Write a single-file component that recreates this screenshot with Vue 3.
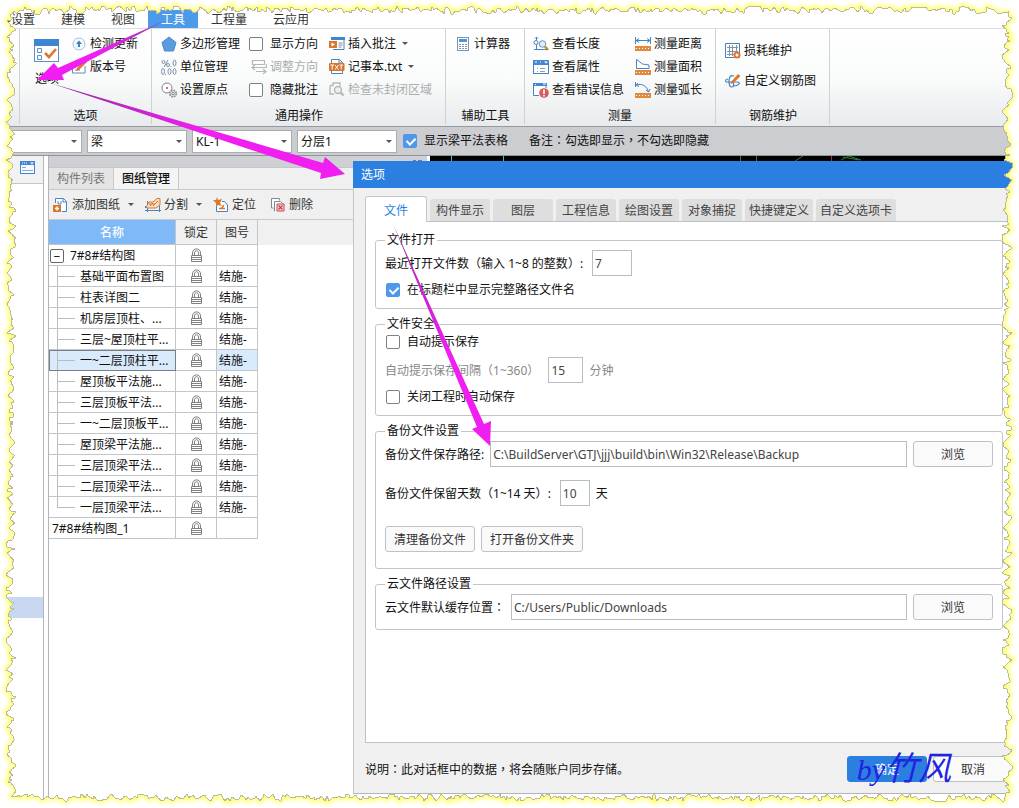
<script setup>
import { ref } from 'vue'

const menus = ['工程设置', '建模', '视图', '工具', '工程量', '云应用']

const icons = {
  options: '<rect x="0.500" y="0.500" width="24" height="22" fill="#fff" stroke="#5d8fc0"/><rect x="0" y="0" width="25" height="7" fill="#3f86d2"/><path d="M3.500 9.500h4v4h-4zM3.500 16.500h4v4h-4z" fill="none" stroke="#5d8fc0"/><path d="M11 14l4 4 7-8" fill="none" stroke="#e0762c" stroke-width="2.600"/>',
  update: '<circle cx="8" cy="8" r="6" fill="#f4f9fd" stroke="#a3c1dc"/><path d="M8 4.500L11 8H9v3H7V8H5z" fill="#3f7fc0"/>',
  version: '<path d="M14 7v7H1.500V5H8" fill="#fff" stroke="#5d8fc0"/><path d="M4 11h5" stroke="#5d8fc0"/><path d="M6 9L14 1l2 2-8 8-3 1z" fill="#e0762c"/>',
  polygon: '<path d="M8 1l7 5.500L12.500 15h-9L1 6.500z" fill="#5b9be0" stroke="#4787d0"/>',
  unit: '<g fill="none" stroke="#7c8fa3"><circle cx="2.500" cy="3" r="1.500"/><path d="M7 1L3 8"/><circle cx="7" cy="6" r="1.500"/><ellipse cx="13.500" cy="4" rx="1.500" ry="3"/><ellipse cx="2" cy="12.500" rx="1.500" ry="3"/><ellipse cx="8.500" cy="12.500" rx="1.500" ry="3"/><ellipse cx="13.500" cy="12.500" rx="1.500" ry="3"/><path d="M10 7v1M4.500 15v1"/></g>',
  origin: '<circle cx="6" cy="6" r="5" fill="#fff" stroke="#788796"/><circle cx="6" cy="6" r="1" fill="#d43d3d"/><circle cx="12" cy="11.500" r="3.300" fill="#ddd" stroke="#85898e" stroke-width="1.600" stroke-dasharray="1.600 1"/><circle cx="12" cy="11.500" r="1.200" fill="#fff" stroke="#85898e"/>',
  adjust: '<g fill="none" stroke="#b4b7ba" stroke-width="1.200"><path d="M1.500 1.500h12v4h-12zM15.500 5v3.500H1M4 6l-3 2.500L4 11M5 12.500h10M12 10l3 2.500-3 2.500"/></g>',
  note: '<path d="M2 2.500h13v11H4" fill="#fff" stroke="#4683c2"/><path d="M2 1h14v3H2z" fill="#3f86d2"/><path d="M0 5h8v7H0z" fill="#d9772f"/><path d="M2.500 6.500l3.500 2-3.500 2z" fill="#fff"/><path d="M9.500 7h4M9.500 9h4M9.500 11h3" stroke="#888"/>',
  txt: '<path d="M2.500 5V.5h8l3 3V5M2.500 12v2.500h11V12" fill="#fff" stroke="#4683c2"/><path d="M10 .5V4h4" fill="none" stroke="#4683c2"/><rect x="0" y="4" width="15.500" height="8" rx="1" fill="#d9772f"/><path d="M1.500 6h3.500M3.200 6v4.500M6 6l3.500 4.500M9.500 6L6 10.500M10.500 6H14M12.200 6v4.500" stroke="#fff" fill="none"/>',
  region: '<path d="M1 3.500h3V1h7v3M1 3.500V12h4" fill="none" stroke="#b4b7ba" stroke-width="1.300"/><circle cx="9" cy="8" r="3.500" fill="#eee" stroke="#b4b7ba" stroke-width="1.400"/><path d="M11.500 10.500l3 3" stroke="#b4b7ba" stroke-width="2.400"/>',
  calc: '<rect x="2.500" y="1.500" width="11" height="13" fill="#fff" stroke="#7996b4"/><rect x="4" y="3" width="8" height="3" fill="#4f93dc"/><path d="M4 8.500h8M4 10.500h8M4 12.500h8" stroke="#7996b4" stroke-dasharray="2 1"/>',
  length: '<path d="M3.500 1v3M2 2.500L3.500 1 5 2.500M3.500 8v6M1 13.500h14" fill="none" stroke="#4683c2"/><circle cx="3" cy="6.500" r="2" fill="#fff" stroke="#4683c2"/><circle cx="9.500" cy="8" r="3.300" fill="#dcebf8" stroke="#6c94bd"/><path d="M12 10.500l3 3.500" stroke="#c58b30" stroke-width="2.400"/>',
  props: '<rect x=".5" y="1.500" width="15" height="13" fill="#fff" stroke="#4683c2"/><path d="M0 1h16v5H0z" fill="#4488d0"/><path d="M2 3h2M7 3h1" stroke="#fff"/><path d="M11 2.500h4l-2 2z" fill="#fff"/><path d="M4 9.500h1M7 9.500h5M4 12.500h1M7 12.500h5" stroke="#8fa0b1"/>',
  error: '<path d="M13 6V1.500H.5v12H6" fill="#fff" stroke="#4683c2"/><path d="M0 1h14v3H0z" fill="#4488d0"/><path d="M10 2h3M2 2.500h1" stroke="#fff"/><circle cx="11" cy="11" r="4.800" fill="#d65b5f"/><path d="M11 7.500v4.500M11 13v1.500" stroke="#fff" stroke-width="1.600"/>',
  distance: '<path d="M.5 1v7M15.500 1v7M1 4.500h14M4 2.500l-3 2 3 2M12 2.500l3 2-3 2" fill="none" stroke="#4683c2"/><path d="M0 10h16v5H0z" fill="#e08a3e"/><path d="M1 12.500h14" stroke="#fff" stroke-width="1" stroke-dasharray="1 2"/>',
  area: '<path d="M1.500 9.500V.5l6 4.500 6.500 1v3.500z" fill="#fff" stroke="#4683c2"/><path d="M0 11h16v5H0z" fill="#e08a3e"/><path d="M1 13.500h14" stroke="#fff" stroke-dasharray="1 2"/>',
  arc: '<path d="M1 3c6-2 11 1 12.500 7M.5 0v5M3 1L1 3l3 1.500M11 8l2.500 2L15 7" fill="none" stroke="#4683c2"/><path d="M0 11h16v5H0z" fill="#e08a3e"/><path d="M1 13.500h14" stroke="#fff" stroke-dasharray="1 2"/>',
  loss: '<path d="M.5.5h14v14H.5z" fill="#fff" stroke="#4683c2"/><path d="M2 4.500h11M2 8.500h11M2 11.500h7M4.500 2v11M7.500 2v11M11.500 2v7" stroke="#8494a4"/><circle cx="12" cy="12" r="2.500" fill="#fff" stroke="#e0762c" stroke-width="2"/>',
  rebar: '<path d="M9 3C4 1 4 7 4 9s0 5 3 5 1-6 1-7M9 9H2c-2 0-2-3 1-3M9 9h4c3 1 0 4-4 4" fill="none" stroke="#4683c2" stroke-width="1.200"/><path d="M6 9l7-8 2.500 2-7 7-3 1z" fill="#e0762c"/>',
  panel: '<rect x=".5" y="1.500" width="14" height="12" fill="#f8fbfe" stroke="#3f86d2"/><path d="M0 1h15v4H0z" fill="#3f86d2"/><path d="M2 3h1M4 3h1M6 3h1" stroke="#fff"/><path d="M10 2.500h4l-2 2z" fill="#fff"/><path d="M2 7.500h4M2 10.500h11" stroke="#7cacdd"/>',
  addSheet: '<path d="M2.500 6V1.500h8l3 3v10H9" fill="#fff" stroke="#4683c2"/><path d="M10 1.500V5h3.500M5 4v3h3v-3" fill="none" stroke="#4683c2"/><path d="M0 8h8v7H0z" fill="#d9772f"/><path d="M4 9.500v4M2 11.500h4" stroke="#fff" stroke-width="1.400"/>',
  split: '<path d="M0 13.500h16M2.500 4v11M14.500 7v8M.5 9v2" stroke="#4683c2" fill="none"/><path d="M1.500 9.500L4 5h4l4-3.500h3V8l-4 3H1.500z" fill="#f6ddc8" stroke="#d9772f"/><path d="M5 9l3-3M8 9l5-5M4 7h6" stroke="#d9772f"/>',
  locate: '<path d="M3.500 7v7.500h11V8l-3-3.500H9" fill="#fff" stroke="#4683c2"/><path d="M4 0l1 3 4-1-2 4 2 3-4-1-2 2V6L0 3h3z" fill="#d9772f"/><path d="M6 11.500h6M11 8l-3 4" stroke="#d9772f" stroke-width="1.500"/>',
  remove: '<path d="M3.500 11H1.500V1.500h8v2M5 14H4.500V4.500h6l2 2v1" fill="#fff" stroke="#7d8b99"/><path d="M7 7h7v7H7z" fill="#f4dadb" stroke="#c9474e"/><path d="M8.500 8.500l4 4M12.500 8.500l-4 4" stroke="#c9474e" stroke-width="1.400"/>',
  lock: '<path d="M2.500 7V5C2.500-.5 10.500-.5 10.500 5v2M4.500 7V5c0-3 4-3 4 0v2" fill="none" stroke="#808080"/><path d="M1.500 7.500h10v6h-10zM2 9.500h9M2 11.500h9" fill="#fff" stroke="#808080"/>',
}

const measureA = [['length', '查看长度'], ['props', '查看属性'], ['error', '查看错误信息']]
const measureB = [['distance', '测量距离'], ['area', '测量面积'], ['arc', '测量弧长']]
const generalA = [['polygon', '多边形管理'], ['unit', '单位管理'], ['origin', '设置原点']]

const combos = ['', '梁', 'KL-1', '分层1']
const showTable = ref(true)
const showDirection = ref(false)
const hideNotes = ref(false)

const sheetTools = [
  ['addSheet', '添加图纸', true],
  ['split', '分割', true],
  ['locate', '定位', false],
  ['remove', '删除', false],
]
const sheets = [
  '基础平面布置图', '柱表详图二', '机房层顶柱、...', '三层~屋顶柱平...', '一~二层顶柱平...',
  '屋顶板平法施...', '三层顶板平法...', '一~二层顶板平...', '屋顶梁平法施...',
  '三层顶梁平法...', '二层顶梁平法...', '一层顶梁平法...',
]
const selected = ref(4)

const tabs = ['文件', '构件显示', '图层', '工程信息', '绘图设置', '对象捕捉', '快捷键定义', '自定义选项卡']
const activeTab = ref('文件')

const recent = ref('7')
const fullPath = ref(true)
const autoPrompt = ref(false)
const interval = ref('15')
const saveOnClose = ref(false)
const backupPath = ref('C:\\BuildServer\\GTJ\\jjj\\build\\bin\\Win32\\Release\\Backup')
const keepDays = ref('10')
const cloudPath = ref('C:/Users/Public/Downloads')

// Ragged paper edge: a seeded walk between two bounds on each side.
let seed = 37
const rnd = () => {
  seed = (seed * 16807) % 2147483647
  return seed / 2147483647
}
function walk(from, to, low, high) {
  const out = []
  const dir = to > from ? 1 : -1
  let v = (low + high) / 2
  let up = true
  let target = high
  for (let p = from; dir > 0 ? p < to : p > to; p += dir * (1 + Math.floor(rnd() * 3))) {
    if (Math.abs(v - target) < 2) {
      up = !up
      target = up ? high - rnd() * 3 : low + rnd() * 3
    }
    v += Math.sign(target - v) * rnd() * 3.5 + (rnd() - 0.5) * 4
    v = Math.max(low, Math.min(high, v))
    out.push([p, Math.round(v)])
  }
  return out
}
const edge = [
  ...walk(14, 1004, 6, 14),
  ...walk(12, 796, 1002, 1012).map(([y, x]) => [x, y]),
  ...walk(1004, 14, 794, 801),
  ...walk(796, 12, 6, 16).map(([y, x]) => [x, y]),
]
const torn = 'M' + edge.map((p) => p.join(' ')).join('L') + 'Z'
const outside = 'M-20-20H1039V828H-20Z' + torn
</script>

<template>
  <div class="app">
    <nav class="menu">
      <a v-for="m in menus" :key="m" href="#" :class="{ on: m === '工具' }">{{ m }}</a>
    </nav>

    <section class="ribbon">
      <div class="group g-options">
        <div class="cols">
          <button class="big">
            <svg width="26" height="24" viewBox="0 0 26 24" v-html="icons.options" />
            <span>选项</span>
          </button>
          <div class="col">
            <button class="tool"><svg class="ic" viewBox="0 0 16 16" v-html="icons.update" />检测更新</button>
            <button class="tool"><svg class="ic" viewBox="0 0 16 16" v-html="icons.version" />版本号</button>
          </div>
        </div>
        <div class="caption">选项</div>
      </div>

      <div class="group g-general">
        <div class="cols">
          <div class="col">
            <button v-for="t in generalA" :key="t[0]" class="tool">
              <svg class="ic" viewBox="0 0 16 16" v-html="icons[t[0]]" />{{ t[1] }}
            </button>
          </div>
          <div class="col">
            <label class="check"><input v-model="showDirection" type="checkbox" />显示方向</label>
            <button class="tool off inset" disabled><svg class="ic" viewBox="0 0 16 16" v-html="icons.adjust" />调整方向</button>
            <label class="check"><input v-model="hideNotes" type="checkbox" />隐藏批注</label>
          </div>
          <div class="col">
            <button class="tool"><svg class="ic" viewBox="0 0 16 16" v-html="icons.note" />插入批注<i class="caret" /></button>
            <button class="tool"><svg class="ic" viewBox="0 0 16 16" v-html="icons.txt" />记事本.txt<i class="caret" /></button>
            <button class="tool off" disabled><svg class="ic" viewBox="0 0 16 16" v-html="icons.region" />检查未封闭区域</button>
          </div>
        </div>
        <div class="caption">通用操作</div>
      </div>

      <div class="group g-aid">
        <div class="cols">
          <div class="col">
            <button class="tool"><svg class="ic" viewBox="0 0 16 16" v-html="icons.calc" />计算器</button>
          </div>
        </div>
        <div class="caption">辅助工具</div>
      </div>

      <div class="group g-measure">
        <div class="cols">
          <div class="col">
            <button v-for="t in measureA" :key="t[0]" class="tool">
              <svg class="ic" viewBox="0 0 16 16" v-html="icons[t[0]]" />{{ t[1] }}
            </button>
          </div>
          <div class="col">
            <button v-for="t in measureB" :key="t[0]" class="tool">
              <svg class="ic" viewBox="0 0 16 16" v-html="icons[t[0]]" />{{ t[1] }}
            </button>
          </div>
        </div>
        <div class="caption">测量</div>
      </div>

      <div class="group g-rebar">
        <div class="cols">
          <div class="col loose">
            <button class="tool"><svg class="ic" viewBox="0 0 16 16" v-html="icons.loss" />损耗维护</button>
            <button class="tool"><svg class="ic" viewBox="0 0 16 16" v-html="icons.rebar" />自定义钢筋图</button>
          </div>
        </div>
        <div class="caption">钢筋维护</div>
      </div>
    </section>

    <section class="bar">
      <span v-for="(c, i) in combos" :key="i" class="combo" :class="{ first: i === 0 }">
        <select :aria-label="'构件 ' + (i + 1)"><option>{{ c }}</option></select>
        <i class="caret" />
      </span>
      <label class="check"><input v-model="showTable" type="checkbox" />显示梁平法表格</label>
      <span class="remark">备注<span class="mid">：</span>勾选即显示<span class="mid">，</span>不勾选即隐藏</span>
    </section>

    <main class="body">
      <aside class="strip">
        <div class="strip-head"><svg class="ic" viewBox="0 0 16 16" v-html="icons.panel" /></div>
        <div class="strip-mark" />
      </aside>

      <section class="sheets">
        <div class="sheet-tabs">
          <button>构件列表</button>
          <button class="on">图纸管理</button>
        </div>
        <div class="sheet-tools">
          <button v-for="t in sheetTools" :key="t[0]" class="tool">
            <svg class="ic" viewBox="0 0 16 16" v-html="icons[t[0]]" />{{ t[1] }}<i v-if="t[2]" class="caret" />
          </button>
        </div>
        <div class="table-wrap">
          <table>
            <thead>
              <tr><th class="name">名称</th><th class="lock">锁定</th><th class="no">图号</th></tr>
            </thead>
            <tbody>
              <tr>
                <td class="root"><div><button class="fold" aria-label="折叠">−</button>7#8#结构图</div></td>
                <td class="lock"><svg width="13" height="14" viewBox="0 0 13 14" v-html="icons.lock" /></td>
                <td />
              </tr>
              <tr v-for="(s, i) in sheets" :key="s" :class="{ sel: i === selected }" @click="selected = i">
                <td class="leaf" :class="{ last: i === sheets.length - 1 }">{{ s }}</td>
                <td class="lock"><svg width="13" height="14" viewBox="0 0 13 14" v-html="icons.lock" /></td>
                <td class="no">结施-</td>
              </tr>
              <tr>
                <td class="plain">7#8#结构图_1</td>
                <td class="lock"><svg width="13" height="14" viewBox="0 0 13 14" v-html="icons.lock" /></td>
                <td />
              </tr>
            </tbody>
          </table>
        </div>
      </section>

      <section class="work">
        <svg class="canvas" width="100%" height="5">
          <rect width="100%" height="5" fill="#000" />
          <rect width="74" height="5" fill="#cfd1d6" />
          <path d="M60 4.500h3M65 4.500h4" stroke="#5580b0" />
          <rect x="74" width="3" height="5" fill="#fff" />
          <path d="M98.500 0v5M150.500 0v5" stroke="#4fb8b8" />
          <path d="M387.500 0v5M403.500 0v5M442 5l8-5M488 4l8-4 12 4M490 1l16 3" stroke="#2f7a38" fill="none" />
          <path d="M478.500 0v5" stroke="#b02828" />
        </svg>

        <div class="dialog" role="dialog" aria-label="选项">
          <h1>选项</h1>
          <div class="dialog-body">
            <div class="tabs">
              <button v-for="t in tabs" :key="t" :class="{ on: t === activeTab }" @click="activeTab = t">{{ t }}</button>
            </div>
            <div class="page">
              <fieldset class="f-open">
                <legend>文件打开</legend>
                <div class="row short">
                  <label for="recent">最近打开文件数<span class="mid">（</span>输入 1~8 的整数<span class="mid">）</span>:</label>
                  <input id="recent" v-model="recent" class="box w40" type="text" />
                </div>
                <div class="row"><label class="check"><input v-model="fullPath" type="checkbox" />在标题栏中显示完整路径文件名</label></div>
              </fieldset>

              <fieldset class="f-safe">
                <legend>文件安全</legend>
                <div class="row"><label class="check"><input v-model="autoPrompt" type="checkbox" />自动提示保存</label></div>
                <div class="row short dim">
                  <label for="interval">自动提示保存间隔<span class="mid">（</span>1~360<span class="mid">）</span></label>
                  <input id="interval" v-model="interval" class="box w35" type="text" />
                  <span>分钟</span>
                </div>
                <div class="row"><label class="check"><input v-model="saveOnClose" type="checkbox" />关闭工程时自动保存</label></div>
              </fieldset>

              <fieldset class="f-backup">
                <legend>备份文件设置</legend>
                <div class="row">
                  <label for="backup">备份文件保存路径:</label>
                  <input id="backup" v-model="backupPath" class="box grow" type="text" />
                  <button class="btn wide">浏览</button>
                </div>
                <div class="row short">
                  <label for="days">备份文件保留天数<span class="mid">（</span>1~14 天<span class="mid">）</span>:</label>
                  <input id="days" v-model="keepDays" class="box w30" type="text" />
                  <span>天</span>
                </div>
                <div class="row">
                  <button class="btn">清理备份文件</button>
                  <button class="btn">打开备份文件夹</button>
                </div>
              </fieldset>

              <fieldset class="f-cloud">
                <legend>云文件路径设置</legend>
                <div class="row">
                  <label for="cloud">云文件默认缓存位置<span class="mid">：</span></label>
                  <input id="cloud" v-model="cloudPath" class="box grow" type="text" />
                  <button class="btn wide">浏览</button>
                </div>
              </fieldset>
            </div>
          </div>
          <footer>
            <span class="hint">说明<span class="mid">：</span>此对话框中的数据<span class="mid">，</span>将会随账户同步存储。</span>
            <button class="btn wide primary">确定</button>
            <button class="btn wide">取消</button>
          </footer>
        </div>
      </section>
    </main>

    <svg class="overlay" viewBox="0 0 1019 808" preserveAspectRatio="none" aria-hidden="true">
      <defs>
        <linearGradient id="a1" gradientUnits="userSpaceOnUse" x1="163" y1="21" x2="100" y2="52">
          <stop offset="0" stop-color="#9a3fb0" /><stop offset="1" stop-color="#f01ef0" />
        </linearGradient>
        <linearGradient id="a2" gradientUnits="userSpaceOnUse" x1="50" y1="83" x2="200" y2="128">
          <stop offset="0" stop-color="#8a2f98" /><stop offset="1" stop-color="#f01ef0" />
        </linearGradient>
        <linearGradient id="a3" gradientUnits="userSpaceOnUse" x1="393" y1="224" x2="450" y2="350">
          <stop offset="0" stop-color="#9a2fa8" /><stop offset="1" stop-color="#f01ef0" />
        </linearGradient>
        <clipPath id="out"><path :d="outside" clip-rule="evenodd" /></clipPath>
        <filter id="soft" x="-5%" y="-5%" width="110%" height="110%"><feGaussianBlur stdDeviation="2" /></filter>
      </defs>
      <path d="M164 21L58 68 54 63 37 80 64 80 62 75Z" fill="url(#a1)" />
      <path d="M50 83L323 163 325 157 345 174 320 179 321 173Z" fill="url(#a2)" />
      <path d="M393 224L484 424 491 421 490 446 472 429 477 427Z" fill="url(#a3)" />
      <path :d="outside" fill="#fff" fill-rule="evenodd" />
      <g clip-path="url(#out)"><path :d="torn" fill="none" stroke="#ffff50" stroke-width="4" filter="url(#soft)" /></g>
      <path :d="torn" fill="none" stroke="#b9b9a4" stroke-width="1" shape-rendering="crispEdges" />
    </svg>
    <div class="signature"><span>by</span>竹风</div>
  </div>
</template>

<style>
body {
  margin: 0;
  background: #fff;
}
</style>

<style scoped>
* {
  box-sizing: border-box;
}
.app {
  position: relative;
  display: flex;
  flex-direction: column;
  min-height: 100vh;
  overflow: hidden;
  font: 12px/16px "Noto Sans", "Noto Sans CJK SC", sans-serif;
  color: #111;
  white-space: nowrap;
}
button,
input,
select {
  font: inherit;
  color: inherit;
  margin: 0;
}
button {
  padding: 0;
  border: 0;
  background: none;
  white-space: nowrap;
}
svg {
  display: block;
  flex: none;
}
.mid {
  font-family: "Noto Sans CJK TC", sans-serif;
  line-height: 1;
}
.ic {
  width: 16px;
  height: 16px;
}
.caret {
  flex: none;
  width: 0;
  border: 3px solid transparent;
  border-top-color: #555;
  border-bottom: 0;
}
.menu {
  display: flex;
  height: 29px;
  padding-top: 10px;
  margin-left: -26px;
  border-bottom: 1px solid #dcdddf;
}
.menu a {
  padding: 2px 13px 0;
  color: #333;
  text-decoration: none;
}
.menu .on {
  background: #4c9bea;
  color: #fff;
}
.ribbon {
  display: flex;
  height: 98px;
  padding-left: 19px;
  background: linear-gradient(#fff, #fafbfb 50%, #e8ebed);
  border-bottom: 1px solid #979b9f;
}
.group {
  display: flex;
  flex-direction: column;
  justify-content: space-between;
  margin-bottom: 2px;
  padding: 3px 0 0 9px;
  border-right: 1px solid #cfd2d5;
}
.g-options {
  width: 133px;
  padding-left: 14px;
  border-left: 1px solid #cfd2d5;
}
.g-general {
  width: 294px;
}
.g-aid {
  width: 79px;
}
.g-measure {
  width: 191px;
  padding-left: 8px;
}
.g-rebar {
  width: 114px;
}
.caption {
  margin-left: -8px;
  text-align: center;
}
.g-options .caption {
  margin-left: -14px;
}
.cols,
.col {
  display: flex;
}
.col {
  flex-direction: column;
}
.col > * {
  height: 23px;
}
.g-options .cols {
  gap: 11px;
}
.g-general .cols {
  gap: 9px;
}
.g-general .col + .col + .col {
  margin-left: 2px;
}
.g-measure .cols {
  gap: 11px;
}
.loose {
  gap: 7px;
  padding-top: 7px;
}
.tool {
  display: flex;
  align-items: center;
  gap: 3px;
}
.tool .caret {
  margin-left: 3px;
}
.off {
  color: #aaadb0;
}
.inset {
  padding-left: 2px;
}
.big {
  display: flex;
  flex-direction: column;
  align-items: center;
  gap: 8px;
  padding-top: 7px;
}
.check {
  display: flex;
  align-items: center;
  gap: 7px;
}
.check input {
  appearance: none;
  position: relative;
  width: 14px;
  height: 14px;
  border: 1px solid #808080;
  border-radius: 2px;
  background: #fff;
}
.check input:checked {
  border-color: #4f97e8;
  background: #4f97e8;
}
.check input:checked::after {
  content: "";
  position: absolute;
  left: 4px;
  top: 1px;
  width: 4px;
  height: 7px;
  border: solid #fff;
  border-width: 0 2px 2px 0;
  transform: rotate(45deg);
}
.row .check {
  padding-left: 1px;
}
.bar {
  display: flex;
  align-items: center;
  height: 29px;
  background: #cbcdd1;
  border-bottom: 1px solid #909398;
}
.combo {
  position: relative;
  width: 100px;
  height: 23px;
  margin-right: 5px;
}
.combo.first {
  width: 82px;
}
.combo select {
  appearance: none;
  width: 100%;
  height: 100%;
  padding: 1px 3px 0;
  border: 1px solid #a9acb0;
  border-radius: 0;
  background: #fff;
}
.combo .caret {
  position: absolute;
  right: 5px;
  top: 10px;
}
.bar .check {
  margin-left: 1px;
}
.remark {
  margin-left: 21px;
}
.body {
  display: grid;
  grid-template-columns: 49px 304px 1fr;
  flex: 1;
}
.strip {
  margin-right: 5px;
  border-right: 1px solid #b3b5b8;
}
.strip-head {
  height: 28px;
  padding: 4px 0 0 20px;
  background: #f1f2f3;
  border-bottom: 1px solid #c4c6c8;
}
.strip-mark {
  height: 21px;
  margin-top: 413px;
  background: #c9d8f0;
}
.sheets {
  display: flex;
  flex-direction: column;
  margin-left: -1px;
  padding-top: 11px;
  border-left: 1px solid #b3b5b8;
  background: #cfd0d4;
}
.sheet-tabs {
  display: flex;
  height: 23px;
  background: #f0f0f0;
  border-top: 1px solid #c4c6c8;
  border-bottom: 1px solid #c8cacc;
}
.sheet-tabs button {
  padding: 0 8px;
  background: #e4e4e4;
  color: #777;
  border-right: 1px solid #c8cacc;
}
.sheet-tabs .on {
  background: #f4f4f4;
  color: #111;
  font-weight: 500;
}
.sheet-tools {
  display: flex;
  height: 30px;
  padding-left: 4px;
  gap: 11px;
  background: #f0f0f0;
  border-bottom: 1px solid #c8cacc;
}
.sheet-tools .tool {
  color: #333;
}
.sheet-tools .tool .caret {
  margin-left: 5px;
}
.sheet-tools .tool:nth-child(4) {
  margin-left: 3px;
}
.table-wrap {
  flex: 1;
  background: linear-gradient(#f0f0f0 25px, #fff 25px);
}
table {
  width: 209px;
  table-layout: fixed;
  border-collapse: separate;
  border-spacing: 0;
}
th,
td {
  height: 21px;
  padding: 2px 0 0;
  border: solid #c3c6c9;
  border-width: 0 1px 1px 0;
  background: #fff;
  text-align: left;
  font-weight: 400;
  line-height: 16px;
}
th {
  height: 25px;
  background: #f0f0f0;
  text-align: center;
  color: #333;
}
th.name {
  width: 127px;
  background: #80b9f8;
  color: #fff;
  font-weight: 500;
}
th.lock {
  width: 41px;
}
td.lock {
  padding: 0;
}
td.lock svg {
  margin: auto;
}
td.no {
  padding-left: 2px;
}
.root div {
  display: flex;
  align-items: center;
  gap: 6px;
  padding-left: 1px;
}
.fold {
  width: 14px;
  height: 14px;
  border: 1px solid #666;
  border-radius: 2px;
  line-height: 11px;
}
td.plain {
  padding-left: 3px;
}
td.leaf {
  padding-left: 31px;
  background: linear-gradient(#b9bcc0, #b9bcc0) 8px 0 / 1px 21px no-repeat,
    linear-gradient(#b9bcc0, #b9bcc0) 9px 10px / 17px 1px no-repeat, #fff;
}
td.leaf.last {
  background-size: 1px 11px, 17px 1px, auto;
}
.sel td.leaf {
  background-color: #d9eafc;
  outline: 1px solid #7b7f84;
  outline-offset: -1px;
}
.sel td.no {
  background: #d9eafc;
}
.work {
  display: flex;
  flex-direction: column;
  padding-bottom: 14px;
}
.dialog {
  display: flex;
  flex-direction: column;
  flex: 1;
  background: #f0f0f0;
  border-left: 1px solid #c4c6c8;
  border-bottom: 1px solid #b3b5b8;
}
h1 {
  height: 27px;
  margin: 0 0 0 -1px;
  padding: 6px 8px 0;
  background: #2b7fe1;
  color: #fff;
  font: inherit;
}
.dialog-body {
  display: flex;
  flex-direction: column;
  flex: 1;
  padding: 8px 5px 0 11px;
}
.tabs {
  display: flex;
  align-items: flex-end;
  gap: 3px;
}
.tabs button {
  min-width: 60px;
  height: 22px;
  padding: 2px 4px 0;
  margin-bottom: 1px;
  border-radius: 3px 3px 0 0;
  background: #dedede;
  color: #444;
}
.tabs .on {
  position: relative;
  z-index: 1;
  width: 62px;
  height: 26px;
  margin-bottom: 0;
  border: 1px solid #c4c6c8;
  border-bottom: 0;
  background: #fff;
  color: #2b7fe1;
}
.page {
  display: flex;
  flex-direction: column;
  flex: 1;
  gap: 7px;
  margin-top: -1px;
  padding: 10px 10px 10px 9px;
  border: 1px solid #bfc2c5;
  background: #fff;
}
fieldset {
  margin: 0;
  min-width: 0;
  padding: 2px 9px 8px;
  border: 1px solid #c3c6c9;
  border-radius: 3px;
}
legend {
  height: 16px;
  padding: 0 2px;
}
.row {
  display: flex;
  align-items: center;
  gap: 6px;
  min-height: 20px;
}
.row > label:not(.check),
.row > span,
.hint {
  padding-top: 2px;
}
.short > label {
  margin-right: 3px;
}
.f-open .row + .row {
  margin-top: 4px;
}
.f-safe {
  padding-top: 0;
}
.f-safe .dim {
  margin: 5px 0 4px;
  color: #888;
}
.f-backup {
  padding-bottom: 16px;
}
.f-backup .row:nth-of-type(2) {
  margin: 13px 0 20px;
}
.f-cloud {
  padding-bottom: 9px;
}
.box {
  height: 26px;
  padding: 0 2px;
  border: 1px solid #b9bcc0;
  border-radius: 0;
  background: #fff;
  color: #444;
}
.w30 {
  width: 30px;
}
.w35 {
  width: 35px;
}
.w40 {
  width: 40px;
}
.grow {
  flex: 1;
  min-width: 0;
}
.btn {
  height: 26px;
  padding: 2px 8px 0;
  border: 1px solid #bfc2c5;
  border-radius: 3px;
  background: #fafafb;
  color: #333;
}
.wide {
  width: 80px;
}
.primary {
  border-color: #2b7fe1;
  background: #2b7fe1;
  color: #fff;
}
footer {
  display: flex;
  align-items: center;
  gap: 6px;
  height: 50px;
  padding: 2px 6px 0 11px;
}
.hint {
  flex: 1;
}
.overlay {
  position: absolute;
  inset: 0;
  width: 100%;
  height: 100%;
  pointer-events: none;
}
.signature {
  position: absolute;
  right: 68px;
  bottom: 18px;
  color: #2222e0;
  font: italic 33px/40px "Noto Sans CJK SC", sans-serif;
  pointer-events: none;
}
.signature span {
  font-family: "Liberation Serif", serif;
  font-size: 30px;
}
</style>
